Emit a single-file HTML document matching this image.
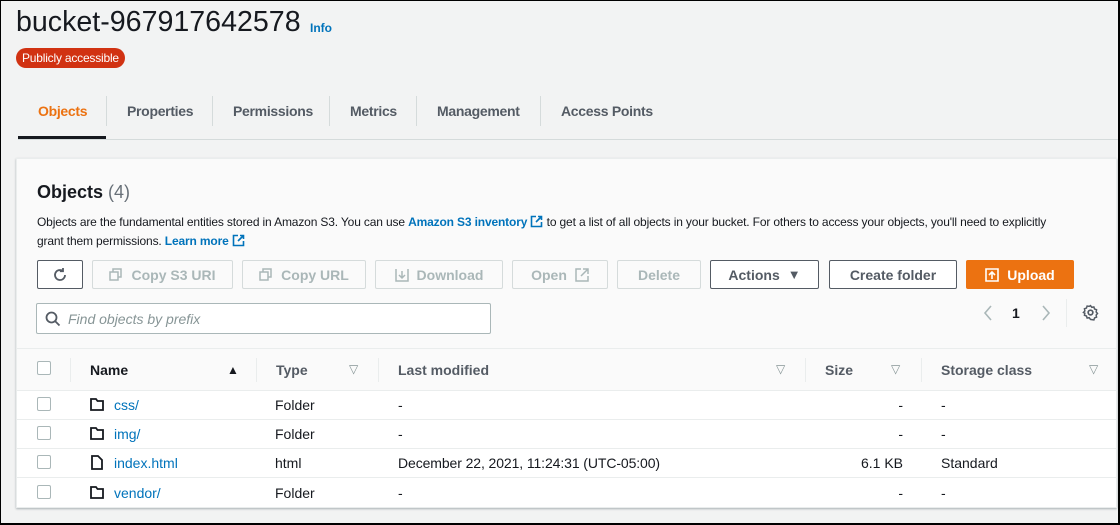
<!DOCTYPE html>
<html><head><meta charset="utf-8"><style>
*{box-sizing:border-box;margin:0;padding:0}
body{width:1120px;height:525px;overflow:hidden;background:#f2f3f3;font-family:"Liberation Sans",Arial,sans-serif;color:#16191f;position:relative}
.a{position:absolute;white-space:nowrap}
.frame{position:absolute;left:0;top:0;width:1120px;height:525px;border:1px solid #000;border-width:1px 2px 2px 1px;pointer-events:none;z-index:10}
.tab{font-size:14px;font-weight:bold;color:#545b64;top:103px;letter-spacing:-0.3px}
.sep{position:absolute;top:96px;width:1px;height:30px;background:#d5dbdb}
.btn{position:absolute;top:260px;height:29px;border:1px solid #d5dbdb;border-radius:2px;background:#fafafa;color:#aab7b8;font-size:14px;font-weight:bold;display:flex;align-items:center;justify-content:center;gap:8px}
.btn.d{border-color:#545b64;color:#545b64;background:#fff}
.hd{font-size:14px;font-weight:bold;color:#545b64;top:362px}
.tri{font-size:12px;color:#879596;top:362px}
.row{position:absolute;left:17px;width:1099px;height:29px;border-top:1px solid #eaeded;background:#fff}
.cb{position:absolute;left:37px;width:14px;height:14px;border:1px solid #aab7b8;border-radius:2px;background:#fff}
.t{font-size:14px;color:#16191f}
.lk{font-size:14px;color:#0073bb}
.vs{position:absolute;top:358px;width:1px;height:24px;background:#eaeded}
.ext{display:inline-block;vertical-align:-2px}
</style></head><body>
<div class="frame"></div>
<div class="a" style="left:16px;top:6px;font-size:28.6px;color:#16191f">bucket-967917642578</div>
<div class="a" style="left:310px;top:21px;font-size:12px;font-weight:bold;color:#0073bb">Info</div>
<div class="a" style="left:16px;top:48px;height:20px;padding:0 6px;border-radius:10px;background:#d13212;color:#fff;font-size:12px;line-height:20px;letter-spacing:-0.2px">Publicly accessible</div>

<div class="a tab" style="left:38px;color:#ec7211">Objects</div>
<div class="a" style="left:18px;top:136px;width:88px;height:3px;background:#16191f"></div>
<div class="sep" style="left:106px"></div>
<div class="a tab" style="left:127px">Properties</div>
<div class="sep" style="left:212px"></div>
<div class="a tab" style="left:233px">Permissions</div>
<div class="sep" style="left:329px"></div>
<div class="a tab" style="left:350px">Metrics</div>
<div class="sep" style="left:416px"></div>
<div class="a tab" style="left:437px">Management</div>
<div class="sep" style="left:540px"></div>
<div class="a tab" style="left:561px">Access Points</div>
<div class="a" style="left:18px;top:139px;width:1100px;height:1px;background:#d5dbdb"></div>

<div class="a" style="left:16px;top:158px;width:1101px;height:350px;background:#fafafa;border:1px solid #eaeded;box-shadow:0 1px 2px rgba(0,28,36,.3)"></div>
<div class="a" style="left:37px;top:182px;font-size:18px;font-weight:bold">Objects <span style="font-weight:normal;color:#687078">(4)</span></div>
<div class="a" style="left:37px;top:215px;font-size:12px;color:#16191f;letter-spacing:-0.15px">Objects are the fundamental entities stored in Amazon S3. You can use <b style="color:#0073bb">Amazon S3 inventory</b> <svg class="ext" width="13" height="13"><path d="M6 1.5H1.5v10h10V7M8 1.5h3.5V5M11.5 1.5L6 7" fill="none" stroke="#0073bb" stroke-width="1.6"/></svg> to get a list of all objects in your bucket. For others to access your objects, you'll need to explicitly</div>
<div class="a" style="left:37px;top:234px;font-size:12px;color:#16191f;letter-spacing:-0.15px">grant them permissions. <b style="color:#0073bb">Learn more</b> <svg class="ext" width="13" height="13"><path d="M6 1.5H1.5v10h10V7M8 1.5h3.5V5M11.5 1.5L6 7" fill="none" stroke="#0073bb" stroke-width="1.6"/></svg></div>

<div class="btn d" style="left:37px;width:46px"><svg width="16" height="16" viewBox="0 0 16 16"><path d="M13 8a5 5 0 1 1-2-4M11 1v3.2h-3.2" fill="none" stroke="#545b64" stroke-width="1.8"/></svg></div>
<div class="btn" style="left:92px;width:141px"><svg width="14" height="14"><rect x="1" y="4" width="8" height="8" fill="none" stroke="#aab7b8" stroke-width="1.5"/><path d="M4 4V1h8v8H9" fill="none" stroke="#aab7b8" stroke-width="1.5"/></svg>Copy S3 URI</div>
<div class="btn" style="left:242px;width:124px"><svg width="14" height="14"><rect x="1" y="4" width="8" height="8" fill="none" stroke="#aab7b8" stroke-width="1.5"/><path d="M4 4V1h8v8H9" fill="none" stroke="#aab7b8" stroke-width="1.5"/></svg>Copy URL</div>
<div class="btn" style="left:375px;width:128px"><svg width="14" height="14"><path d="M1 1v12h12V1M7 3v7M4 7l3 3 3-3" fill="none" stroke="#aab7b8" stroke-width="1.5"/></svg>Download</div>
<div class="btn" style="left:512px;width:96px">Open <svg width="14" height="14"><path d="M6 1H1v12h12V8M8 1h5v5M13 1L6 8" fill="none" stroke="#aab7b8" stroke-width="1.5"/></svg></div>
<div class="btn" style="left:617px;width:84px">Delete</div>
<div class="btn d" style="left:710px;width:109px">Actions <span style="font-size:13px">&#9660;</span></div>
<div class="btn d" style="left:829px;width:128px">Create folder</div>
<div class="btn" style="left:966px;width:108px;background:#ec7211;border-color:#ec7211;color:#fff"><svg width="14" height="14"><path d="M1 1v12h12V1zM7 11V4M4 7l3-3 3 3" fill="none" stroke="#fff" stroke-width="1.6"/></svg>Upload</div>

<div class="a" style="left:36px;top:303px;width:455px;height:31px;border:1px solid #aab7b8;border-radius:2px;background:#fff"></div>
<svg class="a" style="left:45px;top:311px" width="16" height="16"><circle cx="6.5" cy="6.5" r="5" fill="none" stroke="#545b64" stroke-width="1.8"/><path d="M10 10l4.5 4.5" stroke="#545b64" stroke-width="1.8"/></svg>
<div class="a" style="left:68px;top:311px;font-size:14px;font-style:italic;color:#879596">Find objects by prefix</div>
<svg class="a" style="left:983px;top:305px" width="10" height="16"><path d="M8 1L2 8l6 7" fill="none" stroke="#aab7b8" stroke-width="1.6"/></svg>
<div class="a" style="left:1012px;top:305px;font-size:14px;font-weight:bold">1</div>
<svg class="a" style="left:1041px;top:305px" width="10" height="16"><path d="M2 1l6 7-6 7" fill="none" stroke="#aab7b8" stroke-width="1.6"/></svg>
<div class="a" style="left:1066px;top:299px;width:1px;height:28px;background:#eaeded"></div>
<svg class="a" style="left:1082px;top:304px" width="17" height="17" viewBox="0 0 16 16"><circle cx="8" cy="8" r="2.2" fill="none" stroke="#545b64" stroke-width="1.6"/><path d="M8 1.5l1.2 1.6 2-.3.6 1.9 1.9.7-.4 2 1.3 1.5-1.3 1.5.4 2-1.9.7-.6 1.9-2-.3L8 14.5l-1.2-1.6-2 .3-.6-1.9-1.9-.7.4-2L1.4 8l1.3-1.5-.4-2 1.9-.7.6-1.9 2 .3z" fill="none" stroke="#545b64" stroke-width="1.4"/></svg>

<div class="a" style="left:17px;top:348px;width:1099px;height:1px;background:#eaeded"></div>
<div class="cb" style="top:361px"></div>
<div class="vs" style="left:70px"></div>
<div class="a hd" style="left:90px;color:#16191f">Name</div>
<div class="a" style="left:227px;top:363px;font-size:12px;color:#16191f">&#9650;</div>
<div class="vs" style="left:256px"></div>
<div class="a hd" style="left:276px">Type</div>
<div class="a tri" style="left:349px">&#9661;</div>
<div class="vs" style="left:378px"></div>
<div class="a hd" style="left:398px">Last modified</div>
<div class="a tri" style="left:776px">&#9661;</div>
<div class="vs" style="left:805px"></div>
<div class="a hd" style="left:825px">Size</div>
<div class="a tri" style="left:891px">&#9661;</div>
<div class="vs" style="left:921px"></div>
<div class="a hd" style="left:941px">Storage class</div>
<div class="a tri" style="left:1089px">&#9661;</div>

<div class="row" style="top:390px"></div>
<div class="row" style="top:419px"></div>
<div class="row" style="top:448px"></div>
<div class="row" style="top:477px;height:30px"></div>

<div class="cb" style="top:397px"></div><div class="cb" style="top:426px"></div><div class="cb" style="top:455px"></div><div class="cb" style="top:485px"></div>

<svg class="a" style="left:90px;top:398px" width="14" height="13"><path d="M1 1h5l1.5 2H13v9H1z" fill="none" stroke="#16191f" stroke-width="1.8"/></svg>
<svg class="a" style="left:90px;top:427px" width="14" height="13"><path d="M1 1h5l1.5 2H13v9H1z" fill="none" stroke="#16191f" stroke-width="1.8"/></svg>
<svg class="a" style="left:91px;top:455px" width="12" height="15"><path d="M1 1h6l4 4v9H1z" fill="none" stroke="#16191f" stroke-width="1.8"/></svg>
<svg class="a" style="left:90px;top:486px" width="14" height="13"><path d="M1 1h5l1.5 2H13v9H1z" fill="none" stroke="#16191f" stroke-width="1.8"/></svg>

<div class="a lk" style="left:114px;top:397px">css/</div>
<div class="a lk" style="left:114px;top:426px">img/</div>
<div class="a lk" style="left:114px;top:455px">index.html</div>
<div class="a lk" style="left:114px;top:485px">vendor/</div>

<div class="a t" style="left:275px;top:397px">Folder</div>
<div class="a t" style="left:275px;top:426px">Folder</div>
<div class="a t" style="left:275px;top:455px">html</div>
<div class="a t" style="left:275px;top:485px">Folder</div>

<div class="a t" style="left:398px;top:397px">-</div>
<div class="a t" style="left:398px;top:426px">-</div>
<div class="a t" style="left:398px;top:455px;letter-spacing:-0.1px">December 22, 2021, 11:24:31 (UTC-05:00)</div>
<div class="a t" style="left:398px;top:485px">-</div>

<div class="a t" style="right:217px;top:397px">-</div>
<div class="a t" style="right:217px;top:426px">-</div>
<div class="a t" style="right:217px;top:455px">6.1 KB</div>
<div class="a t" style="right:217px;top:485px">-</div>

<div class="a t" style="left:941px;top:397px">-</div>
<div class="a t" style="left:941px;top:426px">-</div>
<div class="a t" style="left:941px;top:455px">Standard</div>
<div class="a t" style="left:941px;top:485px">-</div>
</body></html>
